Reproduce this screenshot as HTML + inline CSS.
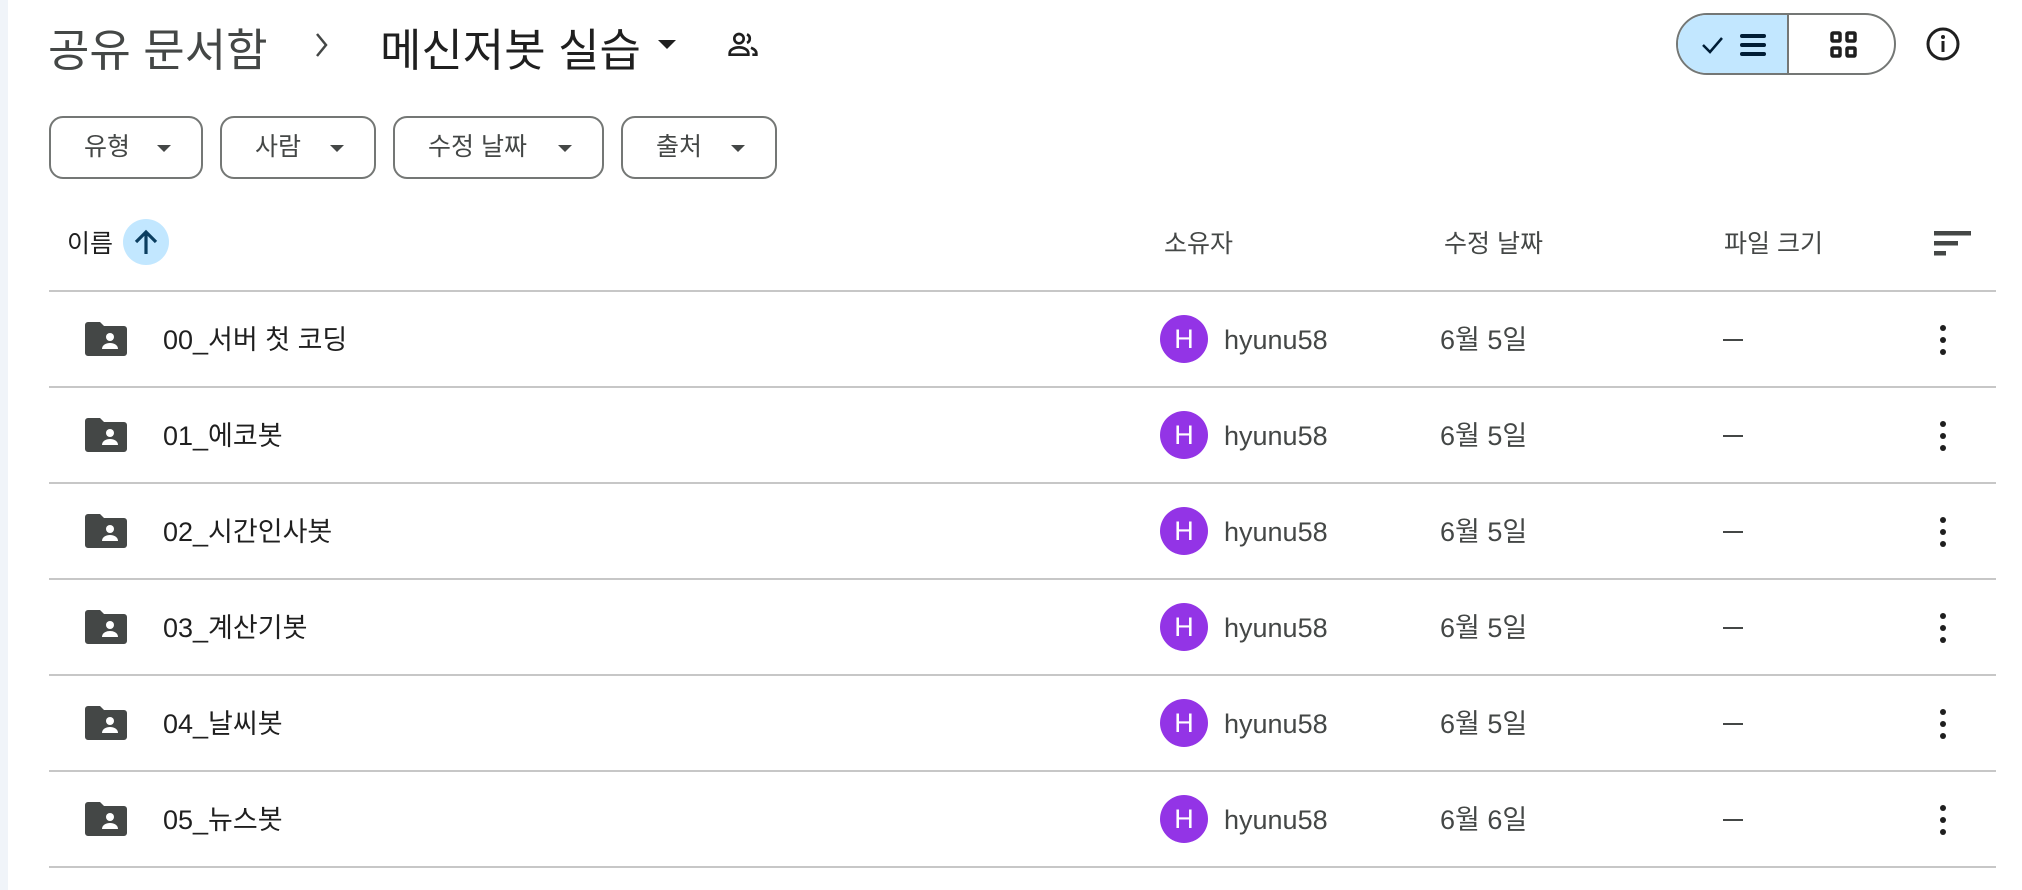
<!DOCTYPE html>
<html><head><meta charset="utf-8"><style>
body{margin:0;width:2022px;height:890px;background:#fff;font-family:"Liberation Sans","Noto Sans CJK KR",sans-serif;color:#1f1f1f;position:relative;overflow:hidden}
.a{position:absolute;white-space:nowrap}
.strip{left:0;top:0;width:8px;height:890px;background:#f0f4f9}
.chip{position:absolute;top:116px;height:63px;border:2px solid #747775;border-radius:14px;box-sizing:border-box;font-size:25px;color:#444746;line-height:58px}
.chip span{position:absolute;left:33px}
.chip i{position:absolute;right:30px;top:27px;width:0;height:0;border-left:7px solid transparent;border-right:7px solid transparent;border-top:7px solid #444746}
.line{position:absolute;left:49px;width:1947px;height:2px;background:#c7c7c7}
.hd{font-size:25px;color:#444746;top:224px}
.row{position:absolute;left:0;width:2022px;height:96px}
.row>*{position:absolute;white-space:nowrap}
.fd{left:85px;top:31px}
.nm{font-size:27px;left:163px;top:27px}
.av{left:1160px;top:24px;width:48px;height:48px;border-radius:50%;background:#9334e6;color:#fff;font-size:27px;text-align:center;line-height:48px}
.own{font-size:27px;left:1224px;top:34px;color:#444746}
.dt{font-size:27px;left:1440px;top:27px;color:#444746}
.dash{left:1723px;top:48px;width:20px;height:2px;background:#444746}
.kb{left:1939px;top:33px}
</style></head><body>
<div class="a strip"></div>
<div class="a" style="left:48px;top:14px;font-size:45px;color:#444746">공유 문서함</div>
<svg class="a" style="left:312px;top:30px" width="20" height="30" viewBox="0 0 20 30"><path d="M5 4 L14 15 L5 26" fill="none" stroke="#444746" stroke-width="2.5"/></svg>
<div class="a" style="left:380px;top:14px;font-size:45px;color:#1f1f1f">메신저봇 실습</div>
<div class="a" style="left:658px;top:40px;width:0;height:0;border-left:9px solid transparent;border-right:9px solid transparent;border-top:9px solid #1f1f1f"></div>
<svg class="a" style="left:726px;top:28px" width="34" height="32" viewBox="0 0 24 24"><circle cx="9" cy="8" r="3.5" fill="none" stroke="#1f1f1f" stroke-width="2"/><path d="M2 19c0-3 4-4.5 7-4.5s7 1.5 7 4.5v1H2z" fill="none" stroke="#1f1f1f" stroke-width="2"/><path d="M15 4.8a3.5 3.5 0 0 1 0 6.4M18 14.8c2 .8 4 2 4 4.2v1h-3" fill="none" stroke="#1f1f1f" stroke-width="2"/></svg>
<div class="a" style="left:1676px;top:13px;width:220px;height:62px;border:2px solid #747775;border-radius:31px;box-sizing:border-box;overflow:hidden">
<div style="position:absolute;left:0;top:0;width:109px;height:62px;background:#c2e7ff;border-right:2px solid #747775"></div>
<svg style="position:absolute;left:22px;top:16px" width="70" height="28" viewBox="0 0 70 28"><path d="M3 14l7 7 12-14" fill="none" stroke="#001d35" stroke-width="2.5"/><rect x="40" y="3" width="26" height="4" rx="2" fill="#001d35"/><rect x="40" y="12" width="26" height="4" rx="2" fill="#001d35"/><rect x="40" y="21" width="26" height="4" rx="2" fill="#001d35"/></svg>
<svg style="position:absolute;left:151px;top:15px" width="30" height="30" viewBox="0 0 30 30"><g fill="none" stroke="#1f1f1f" stroke-width="3.5"><rect x="3" y="3" width="8" height="8" rx="1"/><rect x="18" y="3" width="8" height="8" rx="1"/><rect x="3" y="18" width="8" height="8" rx="1"/><rect x="18" y="18" width="8" height="8" rx="1"/></g></svg>
</div>
<svg class="a" style="left:1925px;top:26px" width="36" height="36" viewBox="0 0 36 36"><circle cx="18" cy="18" r="15" fill="none" stroke="#1f1f1f" stroke-width="3"/><rect x="16.5" y="15" width="3" height="11" fill="#1f1f1f"/><circle cx="18" cy="11" r="2" fill="#1f1f1f"/></svg>

<div class="chip" style="left:49px;width:154px"><span>유형</span><i></i></div>
<div class="chip" style="left:220px;width:156px"><span>사람</span><i></i></div>
<div class="chip" style="left:393px;width:211px"><span>수정 날짜</span><i></i></div>
<div class="chip" style="left:621px;width:156px"><span>출처</span><i></i></div>

<div class="a hd" style="left:67px;color:#1f1f1f">이름</div>
<div class="a" style="left:123px;top:219px;width:46px;height:46px;border-radius:50%;background:#c2e7ff"></div>
<svg class="a" style="left:131px;top:227px" width="30" height="30" viewBox="0 0 30 30"><path d="M15 27V5M5 15L15 5l10 10" fill="none" stroke="#0b3e60" stroke-width="3.2"/></svg>
<div class="a hd" style="left:1164px">소유자</div>
<div class="a hd" style="left:1444px">수정 날짜</div>
<div class="a hd" style="left:1724px">파일 크기</div>
<svg class="a" style="left:1934px;top:230px" width="38" height="28" viewBox="0 0 38 28"><rect x="0" y="1" width="37" height="4.5" fill="#444746"/><rect x="0" y="11" width="24" height="4.5" fill="#444746"/><rect x="0" y="21" width="12" height="4.5" fill="#444746"/></svg>
<div class="line" style="top:290px"></div>

<div class="row" style="top:291px">
<svg class="fd" width="42" height="34" viewBox="0 0 42 34"><path d="M3 0h12l4 4h20a3 3 0 0 1 3 3v24a3 3 0 0 1-3 3H3a3 3 0 0 1-3-3V3a3 3 0 0 1 3-3z" fill="#444746"/><circle cx="25" cy="15" r="4" fill="#fff"/><path d="M17 27c0-4 4-6 8-6s8 2 8 6z" fill="#fff"/></svg>
<div class="nm">00_서버 첫 코딩</div><div class="av">H</div><div class="own">hyunu58</div><div class="dt">6월 5일</div><div class="dash"></div>
<svg class="kb" width="8" height="32" viewBox="0 0 8 32"><circle cx="4" cy="4" r="3" fill="#1f1f1f"/><circle cx="4" cy="16" r="3" fill="#1f1f1f"/><circle cx="4" cy="28" r="3" fill="#1f1f1f"/></svg>
</div>
<div class="line" style="top:386px"></div>

<div class="row" style="top:387px">
<svg class="fd" width="42" height="34" viewBox="0 0 42 34"><path d="M3 0h12l4 4h20a3 3 0 0 1 3 3v24a3 3 0 0 1-3 3H3a3 3 0 0 1-3-3V3a3 3 0 0 1 3-3z" fill="#444746"/><circle cx="25" cy="15" r="4" fill="#fff"/><path d="M17 27c0-4 4-6 8-6s8 2 8 6z" fill="#fff"/></svg>
<div class="nm">01_에코봇</div><div class="av">H</div><div class="own">hyunu58</div><div class="dt">6월 5일</div><div class="dash"></div>
<svg class="kb" width="8" height="32" viewBox="0 0 8 32"><circle cx="4" cy="4" r="3" fill="#1f1f1f"/><circle cx="4" cy="16" r="3" fill="#1f1f1f"/><circle cx="4" cy="28" r="3" fill="#1f1f1f"/></svg>
</div>
<div class="line" style="top:482px"></div>

<div class="row" style="top:483px">
<svg class="fd" width="42" height="34" viewBox="0 0 42 34"><path d="M3 0h12l4 4h20a3 3 0 0 1 3 3v24a3 3 0 0 1-3 3H3a3 3 0 0 1-3-3V3a3 3 0 0 1 3-3z" fill="#444746"/><circle cx="25" cy="15" r="4" fill="#fff"/><path d="M17 27c0-4 4-6 8-6s8 2 8 6z" fill="#fff"/></svg>
<div class="nm">02_시간인사봇</div><div class="av">H</div><div class="own">hyunu58</div><div class="dt">6월 5일</div><div class="dash"></div>
<svg class="kb" width="8" height="32" viewBox="0 0 8 32"><circle cx="4" cy="4" r="3" fill="#1f1f1f"/><circle cx="4" cy="16" r="3" fill="#1f1f1f"/><circle cx="4" cy="28" r="3" fill="#1f1f1f"/></svg>
</div>
<div class="line" style="top:578px"></div>

<div class="row" style="top:579px">
<svg class="fd" width="42" height="34" viewBox="0 0 42 34"><path d="M3 0h12l4 4h20a3 3 0 0 1 3 3v24a3 3 0 0 1-3 3H3a3 3 0 0 1-3-3V3a3 3 0 0 1 3-3z" fill="#444746"/><circle cx="25" cy="15" r="4" fill="#fff"/><path d="M17 27c0-4 4-6 8-6s8 2 8 6z" fill="#fff"/></svg>
<div class="nm">03_계산기봇</div><div class="av">H</div><div class="own">hyunu58</div><div class="dt">6월 5일</div><div class="dash"></div>
<svg class="kb" width="8" height="32" viewBox="0 0 8 32"><circle cx="4" cy="4" r="3" fill="#1f1f1f"/><circle cx="4" cy="16" r="3" fill="#1f1f1f"/><circle cx="4" cy="28" r="3" fill="#1f1f1f"/></svg>
</div>
<div class="line" style="top:674px"></div>

<div class="row" style="top:675px">
<svg class="fd" width="42" height="34" viewBox="0 0 42 34"><path d="M3 0h12l4 4h20a3 3 0 0 1 3 3v24a3 3 0 0 1-3 3H3a3 3 0 0 1-3-3V3a3 3 0 0 1 3-3z" fill="#444746"/><circle cx="25" cy="15" r="4" fill="#fff"/><path d="M17 27c0-4 4-6 8-6s8 2 8 6z" fill="#fff"/></svg>
<div class="nm">04_날씨봇</div><div class="av">H</div><div class="own">hyunu58</div><div class="dt">6월 5일</div><div class="dash"></div>
<svg class="kb" width="8" height="32" viewBox="0 0 8 32"><circle cx="4" cy="4" r="3" fill="#1f1f1f"/><circle cx="4" cy="16" r="3" fill="#1f1f1f"/><circle cx="4" cy="28" r="3" fill="#1f1f1f"/></svg>
</div>
<div class="line" style="top:770px"></div>

<div class="row" style="top:771px">
<svg class="fd" width="42" height="34" viewBox="0 0 42 34"><path d="M3 0h12l4 4h20a3 3 0 0 1 3 3v24a3 3 0 0 1-3 3H3a3 3 0 0 1-3-3V3a3 3 0 0 1 3-3z" fill="#444746"/><circle cx="25" cy="15" r="4" fill="#fff"/><path d="M17 27c0-4 4-6 8-6s8 2 8 6z" fill="#fff"/></svg>
<div class="nm">05_뉴스봇</div><div class="av">H</div><div class="own">hyunu58</div><div class="dt">6월 6일</div><div class="dash"></div>
<svg class="kb" width="8" height="32" viewBox="0 0 8 32"><circle cx="4" cy="4" r="3" fill="#1f1f1f"/><circle cx="4" cy="16" r="3" fill="#1f1f1f"/><circle cx="4" cy="28" r="3" fill="#1f1f1f"/></svg>
</div>
<div class="line" style="top:866px"></div>
</body></html>
